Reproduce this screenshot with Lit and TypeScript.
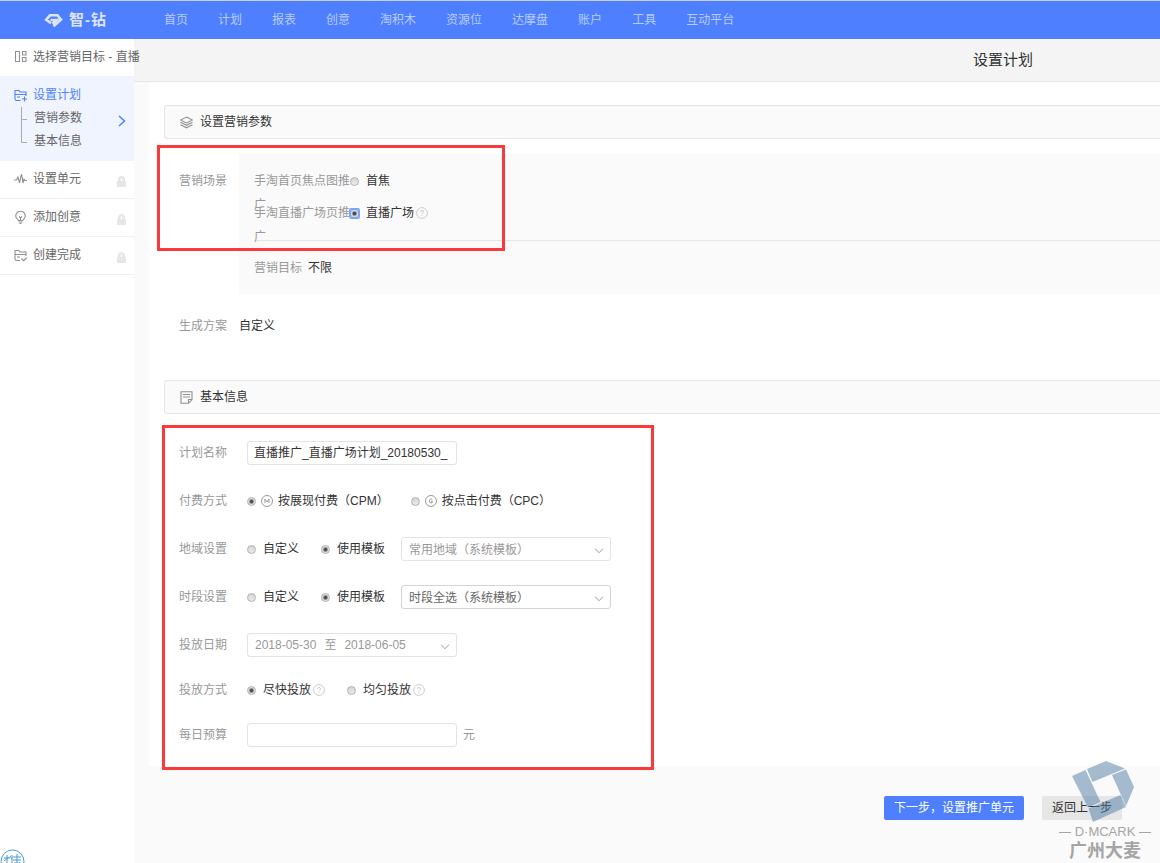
import { LitElement, html, css, svg, nothing } from "lit";
import { customElement, property } from "lit/decorators.js";

const icons: Record<string, unknown> = {
  grid: svg`<path d="M1.500 1.500h4v10h-4zM8.500 1.500h3.500v3.500h-3.500zM8.500 7.500h3.500v4h-3.500z"/>`,
  plan: svg`<path d="M6.500 11.500H2.500Q1 11.500 1 10V1.500h4l1 1.500h6v4M1 5.500h11M3 8h3M8 10h5M10.500 7.500v5"/>`,
  pulse: svg`<path d="M0 7h2.500l1.500-3 1.500 6 2-9 1.500 9 1-4 .8 1.500H13"/>`,
  bulb: svg`<path d="M4.500 9.500C3 8.300 1.700 7 1.700 5a4.800 4.800 0 0 1 9.600 0c0 2-1.300 3.300-2.800 4.500zM4.500 11h4M5.500 12.500h2M5 5.500l1.500 1.500L8 5.500M6.500 7v2"/>`,
  done: svg`<path d="M6 11.500H2.500Q1 11.500 1 10V1.500h4l1 1.500h6v4M1 5.500h11M3 8h3M7.500 9.500l2.200 2.200 3-3"/>`,
  layers: svg`<path d="M6.500 1L12.500 4 6.500 7 .5 4zM.5 6.300l6 3 6-3M.5 8.800l6 3 6-3"/>`,
  note: svg`<path d="M8.500 12.300H1V.8h11v8zM8.500 12v-3.500h3.500M3 3.500h7M3 6h7"/>`,
};

const icon = (name: string) => html`
  <svg class="icon" viewBox="0 0 13 13" width="13" height="13" aria-hidden="true">${icons[name]}</svg>`;

const help = html`
  <svg class="help" viewBox="0 0 12 12" width="12" height="12" aria-hidden="true">
    <circle cx="6" cy="6" r="5.400"/>
    <path d="M4.400 4.900C4.400 3 7.600 3 7.600 4.900 7.600 6 6 6 6 7.300M6 8.300v.9"/>
  </svg>`;

const chevron = html`
  <svg class="chevron" viewBox="0 0 10 6" width="10" height="6" aria-hidden="true"><path d="M1 .7l4 4 4-4"/></svg>`;

const lock = html`
  <svg class="lock" viewBox="0 0 9 11" width="9" height="11" aria-hidden="true">
    <path d="M0 5h1V3.500a3.500 3.500 0 0 1 7 0V5h1v6H0z"/><path class="hole" d="M3.800 2.500h1.400v2.500H3.800z"/>
  </svg>`;

const base = css`
  * { box-sizing: border-box; }
  :host {
    font: 12px/24px "Liberation Sans", "Noto Sans CJK SC", sans-serif;
    color: #333;
  }
  a { color: inherit; text-decoration: none; }
  button, input, select { font: inherit; color: inherit; margin: 0; }
  .icon { flex: none; fill: none; stroke: #909090; stroke-width: 1.1; }
`;

@customElement("top-nav")
export class TopNav extends LitElement {
  static styles = [base, css`
    :host { display: block; }
    .bar {
      display: flex; align-items: center; height: 39px; padding-left: 44px;
      background: #4d7fff; border-top: 1px solid #c8ccd4; color: #b8ccff;
    }
    .logo { display: flex; align-items: center; gap: 6px; width: 120px; color: #dbe5ff; font-size: 15px; font-weight: 700; }
    .word { display: flex; gap: 1px; }
    .mark { fill: none; stroke: #dbe5ff; stroke-width: 2.6; }
    nav { display: flex; gap: 30px; white-space: nowrap; }
  `];
  render() {
    const items = ["首页", "计划", "报表", "创意", "淘积木", "资源位", "达摩盘", "账户", "工具", "互动平台"];
    return html`
      <header class="bar">
        <a class="logo" href="#">
          <svg class="mark" viewBox="0 0 19 15" width="19" height="15" aria-hidden="true">
            <path d="M7 10.200L2.200 6.700 6 2.300h7.500L17 6.700 9.500 13.200M6.500 7h6L8.500 10.800"/>
          </svg>
          <span class="word"><span>智</span><span>-</span><span>钻</span></span>
        </a>
        <nav>${items.map((t) => html`<a href="#">${t}</a>`)}</nav>
      </header>`;
  }
}

@customElement("step-list")
export class StepList extends LitElement {
  static styles = [base, css`
    :host { display: block; background: #fff; color: #666; white-space: nowrap; }
    .step {
      display: flex; align-items: center; gap: 6px;
      height: 37px; padding: 0 7px 2px 14px;
    }
    .locked { justify-content: space-between; height: 38px; padding-bottom: 1px; border-bottom: 1px solid #f0f0f0; }
    .name { display: flex; align-items: center; gap: 6px; }
    .lock { fill: #e6e6e6; margin: 5px 1px 0 0; }
    .hole { fill: #fff; }
    .active { display: flex; align-items: center; height: 85px; padding: 0 8px 0 14px; background: #f0f4ff; }
    .body { flex: 1; line-height: 23px; }
    .current { display: flex; align-items: center; gap: 6px; color: #4d7fff; }
    .current .icon { stroke: #4d7fff; }
    ul { list-style: none; margin: 0 0 0 7px; padding: 0; }
    li { display: flex; align-items: center; gap: 7px; }
    li::before { content: ""; align-self: flex-start; width: 5px; height: 12px; border: solid #aaa; border-width: 0 0 1px 1px; }
    li + li::before { height: 23px; margin-top: -11px; }
    .next { fill: none; stroke: #4d7fff; stroke-width: 1.5; margin-top: 5px; }
  `];
  render() {
    const later = [["pulse", "设置单元"], ["bulb", "添加创意"], ["done", "创建完成"]];
    return html`
      <a class="step" href="#">${icon("grid")}<span>选择营销目标 - 直播</span></a>
      <div class="active">
        <div class="body">
          <a class="current" href="#">${icon("plan")}设置计划</a>
          <ul><li><a href="#">营销参数</a></li><li><a href="#">基本信息</a></li></ul>
        </div>
        <svg class="next" viewBox="0 0 8 12" width="8" height="12" aria-hidden="true"><path d="M1 1l5.500 5L1 11"/></svg>
      </div>
      ${later.map(([i, t]) => html`<div class="step locked"><span class="name">${icon(i)}${t}</span>${lock}</div>`)}`;
  }
}

@customElement("brand-mark")
export class BrandMark extends LitElement {
  static styles = [base, css`
    :host { display: flex; flex-direction: column; align-items: center; width: 92px; color: #9c9c9c; opacity: 0.9; }
    .gem { fill: #4f7ba6; opacity: 0.55; margin-right: 4px; }
    .latin { display: flex; align-items: center; gap: 4px; font-size: 13px; line-height: 16px; }
    .latin::before, .latin::after { content: ""; width: 12px; height: 1px; background: #9c9c9c; }
    .han { font-size: 18px; line-height: 22px; font-weight: 700; }
  `];
  render() {
    return html`
      <svg class="gem" viewBox="0 0 64 64" width="64" height="64" aria-hidden="true">
        <path d="M1 16L14.500 10 29.500 42 17 47.500zM16 9L35 1 54 8.500 21.500 22zM55 9.500L63 27 55 46 41 15zM17.500 48.500L49.500 35 55 47 22 62z"/>
      </svg>
      <span class="latin">D·MCARK</span>
      <span class="han">广州大麦</span>`;
  }
}

@customElement("plan-form")
export class PlanForm extends LitElement {
  @property() planName = "直播推广_直播广场计划_20180530_";

  static styles = [base, css`
    :host { display: block; background: #fff; padding: 23px 0 19px 15px; }
    .head {
      display: flex; align-items: center; gap: 7px; height: 34px; padding-left: 15px; margin: 0;
      border: 1px solid #e6e6e6; border-right: 0; border-radius: 3px 0 0 3px;
      background: #fafafa; font-size: 12px; font-weight: 400;
    }
    .block { position: relative; padding: 15px 0 0 15px; }
    .outline { position: absolute; border: 3px solid #f93a3a; pointer-events: none; }
    .outline.scene { left: -7px; top: 6px; width: 348px; height: 106px; }
    .outline.basic { left: -2px; top: 11px; bottom: -23px; width: 492px; }
    .label { color: #999; flex: none; }
    .line { display: flex; }
    .line > .label { width: 60px; }
    .scene-row { padding-bottom: 20px; }
    .scene-row > .label { padding-top: 15px; }
    .panel { flex: 1; padding: 15px 0 0 15px; background: #fafafa; }
    .choices { height: 72px; border-bottom: 1px solid #e6e6e6; }
    .choice { display: flex; height: 32px; }
    .choice .label { width: 96px; }
    .goal { display: flex; align-items: center; gap: 6px; height: 53px; }
    .scheme { padding-bottom: 42px; }

    .rows { display: grid; gap: 24px; padding-top: 12px; }
    .tail { display: grid; gap: 21px; padding-top: 21px; }
    .row { display: flex; align-items: center; height: 24px; }
    .row > .label { width: 68px; }
    .group { display: flex; align-items: center; gap: 22px; }
    .opt { display: flex; align-items: center; gap: 7px; height: 24px; white-space: nowrap; }
    .opt.kind { gap: 5px; }
    .text { display: flex; align-items: center; gap: 2px; }
    .help { fill: none; stroke: #ccc; stroke-width: 1; }
    .pay { fill: none; stroke: #999; stroke-width: 1; }

    input[type="radio"] {
      appearance: none; flex: none; width: 9px; height: 9px; border-radius: 50%;
      border: 1px solid #b0b0b0; background: linear-gradient(#d4d4d4, #ececec);
    }
    input[type="radio"]:checked { background: radial-gradient(circle, #4a4a4a 0 1px, #e0e0e0 3px); }
    .focus input[type="radio"] {
      border-color: #79a7f5; border-radius: 1px; box-shadow: 0 0 0 1px #79a7f5;
      background: radial-gradient(circle, #444 0 1px, #dcdcdc 3px, #79a7f5 5px);
    }

    .field {
      width: 210px; height: 24px; border: 1px solid #e3e3e3; border-radius: 3px;
      padding: 0 6px; background: #fff; outline: 0;
    }
    .unit { margin-left: 6px; color: #999; }
    .pick { display: grid; align-items: center; margin-left: 16px; }
    .pick > * { grid-area: 1 / 1; }
    .pick select { appearance: none; padding: 0 20px 0 7px; color: #666; border-color: #d4d4d4; }
    .pick select.muted { color: #999; border-color: #e3e3e3; opacity: 1; }
    .chevron { fill: none; stroke: #999; stroke-width: 1; }
    .pick .chevron { justify-self: end; margin: 4px 7px 0 0; pointer-events: none; }
    .date { display: flex; align-items: center; gap: 8px; padding: 0 6px 0 7px; color: #999; line-height: 22px; }
    .date .chevron { margin: 4px 0 0 auto; }
  `];

  private option(group: string, text: string, checked: boolean, hint = false, letter = "") {
    return html`
      <label class="opt ${letter ? "kind" : ""}">
        <input type="radio" name=${group} ?checked=${checked} />
        ${letter === "M" ? html`<svg class="pay" viewBox="0 0 12 12" width="12" height="12" aria-hidden="true"><circle cx="6" cy="6" r="5.500"/><path d="M4 8V4l2 3 2-3v4"/></svg>` : nothing}
        ${letter === "C" ? html`<svg class="pay" viewBox="0 0 12 12" width="12" height="12" aria-hidden="true"><circle cx="6" cy="6" r="5.500"/><path d="M7.500 4.800Q7 4 6 4 4.500 4 4.500 6T6 8Q7.500 8 7.500 6.500H6"/></svg>` : nothing}
        <span class="text">${text}${hint ? help : nothing}</span>
      </label>`;
  }

  render() {
    return html`
      <h2 class="head">${icon("layers")}设置营销参数</h2>
      <section class="block">
        <div class="line scene-row">
          <span class="label">营销场景</span>
          <div class="panel">
            <div class="choices">
              <div class="choice"><span class="label">手淘首页焦点图推广</span>${this.option("scene", "首焦", false)}</div>
              <div class="choice focus"><span class="label">手淘直播广场页推广</span>${this.option("scene", "直播广场", true, true)}</div>
            </div>
            <div class="goal"><span class="label">营销目标</span><span>不限</span></div>
          </div>
        </div>
        <div class="line scheme"><span class="label">生成方案</span><span>自定义</span></div>
        <div class="outline scene"></div>
      </section>

      <h2 class="head">${icon("note")}基本信息</h2>
      <section class="block">
        <div class="rows">
          <div class="row"><label class="label" for="name">计划名称</label><input id="name" class="field" type="text" .value=${this.planName} /></div>
          <div class="row"><span class="label">付费方式</span>
            <div class="group">${this.option("pay", "按展现付费（CPM）", true, false, "M")}${this.option("pay", "按点击付费（CPC）", false, false, "C")}</div>
          </div>
          <div class="row"><label class="label" for="area">地域设置</label>
            <div class="group">${this.option("area", "自定义", false)}${this.option("area", "使用模板", true)}</div>
            <div class="pick"><select id="area" class="field muted"><option>常用地域（系统模板）</option></select>${chevron}</div>
          </div>
          <div class="row"><label class="label" for="time">时段设置</label>
            <div class="group">${this.option("time", "自定义", false)}${this.option("time", "使用模板", true)}</div>
            <div class="pick"><select id="time" class="field"><option>时段全选（系统模板）</option></select>${chevron}</div>
          </div>
          <div class="row"><label class="label" for="date">投放日期</label>
            <button id="date" class="field date" type="button"><span>2018-05-30</span><span>至</span><span>2018-06-05</span>${chevron}</button>
          </div>
        </div>
        <div class="tail">
          <div class="row"><span class="label">投放方式</span>
            <div class="group">${this.option("speed", "尽快投放", true, true)}${this.option("speed", "均匀投放", false, true)}</div>
          </div>
          <div class="row"><label class="label" for="budget">每日预算</label><input id="budget" class="field" type="text" /><span class="unit">元</span></div>
        </div>
        <div class="outline basic"></div>
      </section>`;
  }
}

@customElement("app-root")
export class AppRoot extends LitElement {
  static styles = [base, css`
    :host { display: flex; flex-direction: column; position: relative; min-height: 100vh; overflow: hidden; background: #fafafa; }
    .page { flex: 1; display: grid; grid-template-columns: 134px minmax(0, 1fr); }
    step-list { position: relative; z-index: 1; }
    .title {
      height: 43px; margin: 0; padding-right: 127px; text-align: right;
      background: #f4f4f4; border-bottom: 1px solid #e6e6e6;
      font-size: 15px; line-height: 42px; font-weight: 400;
    }
    plan-form { margin-left: 15px; }
    .actions { display: flex; justify-content: flex-end; gap: 18px; padding: 30px 38px 0 0; }
    .btn { height: 24px; padding: 0 10px; border: 0; border-radius: 2px; background: #e6e6e6; line-height: 24px; }
    .primary { background: #4d7fff; color: #fff; }
    brand-mark { position: absolute; right: 9px; bottom: 1px; pointer-events: none; }
    .badge { position: absolute; left: 0; bottom: -11px; z-index: 2; width: 25px; height: 25px; }
    .ring { fill: #fff; stroke: #4a9bd6; }
    .seal { fill: none; stroke: #4a9bd6; stroke-width: 1; }
  `];
  render() {
    return html`
      <top-nav></top-nav>
      <div class="page">
        <step-list></step-list>
        <main>
          <h1 class="title">设置计划</h1>
          <plan-form></plan-form>
          <div class="actions">
            <button class="btn primary" type="button">下一步，设置推广单元</button>
            <button class="btn" type="button">返回上一步</button>
          </div>
        </main>
      </div>
      <brand-mark></brand-mark>
      <svg class="badge" viewBox="0 0 25 25" aria-hidden="true">
        <circle class="ring" cx="12.500" cy="12.500" r="11.500"/>
        <path class="seal" d="M4 9h6M7 6v12M4 12l5-4M5 15h5M10 7l2 3M12 6v12M13 8h8M17 5v9M13 11h8M14 14h7M15 14v5M20 14v5"/>
      </svg>`;
  }
}
